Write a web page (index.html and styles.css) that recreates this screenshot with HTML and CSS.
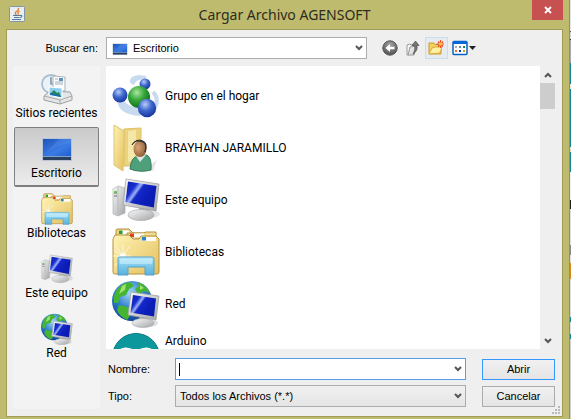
FILE: index.html
```html
<!DOCTYPE html>
<html lang="es">
<head>
<meta charset="utf-8">
<title>Cargar Archivo AGENSOFT</title>
<link rel="stylesheet" href="styles.css">
</head>
<body>
<svg class="defs" aria-hidden="true">
  <defs>
    <linearGradient id="screen" x1="0" y1="0" x2="1" y2=".6"><stop offset="0" stop-color="#0a1ca8"/><stop offset=".3" stop-color="#1830d0"/><stop offset=".42" stop-color="#9db2f8"/><stop offset=".5" stop-color="#1428c8"/><stop offset=".8" stop-color="#0c1cb8"/><stop offset="1" stop-color="#0a1cb0"/></linearGradient>
    <linearGradient id="desk" x1="0" y1="0" x2="1" y2="1"><stop offset="0" stop-color="#1f55b8"/><stop offset=".6" stop-color="#3a7be4"/><stop offset="1" stop-color="#1e5fd0"/></linearGradient>
    <linearGradient id="metal" x1="0" y1="0" x2="1" y2="1"><stop offset="0" stop-color="#fafafa"/><stop offset="1" stop-color="#a2a5a8"/></linearGradient>
    <linearGradient id="fold" x1="0" y1="0" x2="1" y2="1"><stop offset="0" stop-color="#fff3b4"/><stop offset="1" stop-color="#e3bf5c"/></linearGradient>
    <linearGradient id="aqua" x1="0" y1="0" x2="0" y2="1"><stop offset="0" stop-color="#b8e9fa"/><stop offset=".5" stop-color="#7cc8ea"/><stop offset="1" stop-color="#5cb0de"/></linearGradient>
    <radialGradient id="green" cx=".4" cy=".3" r=".7"><stop offset="0" stop-color="#a8e89c"/><stop offset=".5" stop-color="#36a63c"/><stop offset="1" stop-color="#0c7218"/></radialGradient>
    <radialGradient id="blue" cx=".4" cy=".3" r=".7"><stop offset="0" stop-color="#b8cdfa"/><stop offset=".5" stop-color="#4068cc"/><stop offset="1" stop-color="#1838a0"/></radialGradient>
    <radialGradient id="sea" cx=".45" cy=".3" r=".75"><stop offset="0" stop-color="#a6d8fa"/><stop offset=".5" stop-color="#2f80cc"/><stop offset="1" stop-color="#0c3c90"/></radialGradient>
    <radialGradient id="dark" cx=".5" cy=".3" r=".7"><stop offset="0" stop-color="#a5a5a5"/><stop offset="1" stop-color="#505050"/></radialGradient>
    <radialGradient id="skin" cx=".35" cy=".4" r=".7"><stop offset="0" stop-color="#d9a878"/><stop offset="1" stop-color="#8a5730"/></radialGradient>

    <symbol id="i-monitor" viewBox="0 0 48 48">
      <ellipse cx="38" cy="38" rx="10" ry="4" fill="#000" opacity=".1"/>
      <path d="M1 13l5-3 7 2v25l-7 3-5-2z" fill="url(#metal)" stroke="#aaa" stroke-width=".6"/>
      <path d="M6 11v28" stroke="#bbb"/><path d="M2 17h3M2 20h3" stroke="#666"/><circle cx="3.500" cy="16" r="1.300" fill="#48d424"/>
      <path d="M27 31l10 2-1 6-9-2z" fill="#b9bcc0"/>
      <ellipse cx="29" cy="39" rx="13" ry="5.500" fill="url(#metal)" stroke="#a3a3a3" stroke-width=".6"/>
      <path d="M14 3l33 5-3 27-33-6z" fill="url(#metal)" stroke="#999" stroke-width=".7"/>
      <path d="M16 5.500l28.500 4.500-2.700 21.500L13.500 26z" fill="url(#screen)"/>
    </symbol>
    <symbol id="i-library" viewBox="0 0 48 48">
      <path d="M4 8V2q0-1 2-1h11l4 4h10v4z" fill="#ecd387" stroke="#b49340"/>
      <rect x="7" y="2.500" width="10" height="4" fill="#fff"/><rect x="7" y="2.500" width="3.500" height="3.500" fill="#25a036"/>
      <path d="M15 9V5h16l3-1h10v8z" fill="#f1da91" stroke="#b49340"/>
      <rect x="18" y="5.500" width="14" height="4" fill="#fff"/><rect x="18" y="5.500" width="4" height="3.500" fill="#e0401c"/>
      <path d="M1 11l2-4h14l4 4h6l2-3h15l3 3v33q0 2-2 2H3q-2 0-2-2z" fill="url(#fold)" stroke="#b49340"/>
      <rect x="30" y="9" width="14" height="4" fill="#fff"/><rect x="30" y="9" width="4" height="3.500" fill="#2683c4"/>
      <path d="M3 17l8 11M1 28h18M3 38l15-20M11 17v22M2 22l17 12" stroke="#fff" opacity=".7"/><circle cx="11" cy="28" r="3" fill="#fff" opacity=".8"/>
      <path d="M6 47V31q0-2 2-2h32q2 0 2 2v16h-9v-8H16v8z" fill="url(#aqua)" stroke="#52a3cb"/>
      <path d="M8 31h32v5H8z" fill="#d5f3fd" opacity=".5"/>
    </symbol>
    <symbol id="i-network" viewBox="0 0 48 48">
      <circle cx="20" cy="21" r="20" fill="url(#sea)"/>
      <path d="M3 13Q8 3 18 2l4 4-5 3-3 6-6 2-2 6-4 0q-1-5 1-10zM25 2q10 3 13 11l-6-2-6 3-3-5 4-3zM7 25l9 2 4 6-5 7q-8-4-10-10z" fill="#44b431"/>
      <path d="M10 6l4-2-1 6-6 4zM28 5l4 3-4 2z" fill="#a0e26c"/>
      <ellipse cx="37" cy="43" rx="9" ry="4" fill="#000" opacity=".12"/>
      <path d="M28 33l8 2v8l-9-1z" fill="#b6b9bd"/><ellipse cx="31" cy="43" rx="11" ry="4.500" fill="url(#metal)" stroke="#aaa" stroke-width=".6"/>
      <path d="M19 12l28 4-3 24-28-5z" fill="url(#metal)" stroke="#999" stroke-width=".7"/>
      <path d="M21 15l23 3.500-2 18L18.500 32.500z" fill="url(#screen)"/>
    </symbol>
    <symbol id="i-desktop" viewBox="0 0 32 32">
      <path d="M1 5h30v23H1z" fill="#b8c4d4"/><path d="M2 6h28v17H2z" fill="url(#desk)"/>
      <path d="M2 23L18 6h12v4Q14 12 2 23z" fill="#6aa2f4" opacity=".25"/>
      <path d="M2 23h28v4H2z" fill="#29405e"/><path d="M2 23h28v1H2z" fill="#7ea0ca"/>
    </symbol>
  </defs>
</svg>

<div class="stage">
<main class="window">
  <header class="titlebar">
    <svg class="java" viewBox="0 0 16 16" aria-hidden="true">
      <rect x=".5" y=".5" width="15" height="15" rx="1" fill="#e8edf2" stroke="#8496a6"/>
      <path d="M9.500 2Q10 4 7.500 5.500T7.500 9M10.500 5Q8 6.500 9.500 8.500" fill="none" stroke="#e8782a" stroke-width="1.300"/>
      <path d="M4 9.500h7M5 11.500h5M3 13.500h9M11 9.500q3-.5 1.500 1.500l-2 .7" fill="none" stroke="#56799b" stroke-width="1.100"/>
    </svg>
    <h1>Cargar Archivo AGENSOFT</h1>
    <button class="close" type="button" aria-label="Cerrar"><svg viewBox="0 0 8 8"><path d="M1 1l6 6M7 1L1 7" stroke="#fff" stroke-width="1.800"/></svg></button>
  </header>

  <form class="client">
    <div class="lookbar">
      <label for="look">Buscar en:</label>
      <div class="combo look">
        <svg class="mini" aria-hidden="true"><use href="#i-desktop"/></svg>
        <select id="look"><option>Escritorio</option></select>
        <svg class="chev" viewBox="0 0 8 8"><path d="M1 2l3 3 3-3" /></svg>
      </div>
      <div class="tools">
        <button type="button" aria-label="Atrás"><svg viewBox="0 0 16 16"><circle cx="8" cy="8" r="7.200" fill="url(#dark)" stroke="#555"/><path d="M3.500 8L8 4v2.700h4.500v2.600H8V12z" fill="#fff"/></svg></button>
        <button type="button" aria-label="Subir un nivel"><svg viewBox="0 0 16 16"><path d="M2 5l3-1 1 1 3-1v10l-7 1z" fill="#f7f7f7" stroke="#999"/><path d="M5 7l6-1-2 9H3z" fill="#e2e2e2" stroke="#999"/><path d="M8 14q3-4 1.500-8.500H7L10.500 1 14 5.500h-2Q13 11 8 14z" fill="#777" stroke="#4b4b4b" stroke-width=".7"/></svg></button>
        <button class="hot" type="button" aria-label="Crear nueva carpeta"><svg viewBox="0 0 16 16"><path d="M1 14V3h5l1 1.500h6V14z" fill="#f5d060" stroke="#c99a2c"/><path d="M1 14L4 8l3-1h7l-2 6z" fill="#fff0a6" stroke="#d8ac3c"/><path d="M12.500 0v8M8.500 4h8M10 1.500l5 5M15 1.500l-5 5" stroke="#ec4b26" stroke-width="1.200"/><circle cx="12.500" cy="4" r="1.700" fill="#ffc32c"/></svg></button>
        <button class="views" type="button" aria-label="Menú Ver"><svg viewBox="0 0 24 16"><rect x="1" y="1.500" width="14" height="13" rx="1" fill="#fff" stroke="#0860c4" stroke-width="1.500"/><path d="M1 1h14v3H1z" fill="#0868d4"/><path d="M3 6h2v2H3z" fill="#aaa"/><path d="M7 6h2v2H7z" fill="#5686d4"/><path d="M11 6h2v2h-2z" fill="#139542"/><path d="M3 10h2v2H3z" fill="#f06843"/><path d="M7 10h2v2H7z" fill="#16369c"/><path d="M11 10h2v2h-2z" fill="#c69a13"/><path d="M17 6h7l-3.500 4z" fill="#222"/></svg></button>
      </div>
    </div>

    <nav class="places">
      <button type="button"><svg viewBox="0 0 32 32" aria-hidden="true"><circle cx="10" cy="11" r="9" fill="#eaf2f8" stroke="#a9bfcf" stroke-width="1.800"/><path d="M10 4v7h5" fill="none" stroke="#5a7c98" stroke-width="1.200"/><path d="M12 3l12 1v14H12z" fill="#fafcfd" stroke="#a8b4bd"/><path d="M14 6h3M14 9h8M14 11h8" stroke="#9cb0bf"/><path d="M18 5h4v3h-4z" fill="#5b91bd"/><path d="M3 23l6-5 20 1 2 4v4l-12 4L3 27z" fill="#e3e5e6" stroke="#9c9fa2"/><path d="M3 23l16 4v4M19 27l12-4" fill="none" stroke="#aaa"/><path d="M8 14l13 1v10L8 22z" fill="#8dcff0" stroke="#fff"/><path d="M9 21l4-4 3 3 2-1 2 5z" fill="#28805a"/><path d="M9 20l11 3v1L9 22z" fill="#1470b8"/></svg><span>Sitios recientes</span></button>
      <button class="selected" type="button"><svg aria-hidden="true"><use href="#i-desktop"/></svg><span>Escritorio</span></button>
      <button type="button"><svg aria-hidden="true"><use href="#i-library"/></svg><span>Bibliotecas</span></button>
      <button type="button"><svg aria-hidden="true"><use href="#i-monitor"/></svg><span>Este equipo</span></button>
      <button type="button"><svg aria-hidden="true"><use href="#i-network"/></svg><span>Red</span></button>
    </nav>

    <div class="pane">
      <ul class="files">
        <li><svg viewBox="0 0 48 48" aria-hidden="true"><path d="M20 12q4-8 14-6M20 10q-1-5 9-5M41 20q8 8-1 20M7 29q2 12 21 13M10 28q3 9 17 10" fill="none" stroke="#a9c6e8" stroke-width="4" opacity=".65"/><circle cx="33" cy="12" r="5.500" fill="url(#blue)"/><circle cx="8" cy="23" r="7.500" fill="url(#blue)"/><circle cx="27" cy="25" r="11" fill="url(#green)"/><circle cx="35" cy="36" r="9.200" fill="url(#blue)"/></svg><span>Grupo en el hogar</span></li>
        <li><svg viewBox="0 0 48 48" aria-hidden="true"><path d="M33 45l12-9-4 11z" fill="#000" opacity=".1"/><path d="M12 5l17-1v38H12z" fill="#ecd27c" stroke="#dcc065"/><path d="M16 7l8-1v32h-8z" fill="#f5e7a8"/><path d="M2 1l10 6v15l-1 25L2 41z" fill="url(#fold)" stroke="#dcc474"/><path d="M18 45q1-13 9-13l8-1q5 3 4 15-11 3-21-1z" fill="#4f9f7b" stroke="#367a5c"/><path d="M24 32l4 6 6-7z" fill="#dbe9e2"/><ellipse cx="28" cy="25" rx="6.500" ry="8" fill="url(#skin)"/><path d="M20 21q3-6 11-3 4 2 2 10 3-9-2-11-7-3-11 4z" fill="#343434" stroke="#343434"/></svg><span>BRAYHAN JARAMILLO</span></li>
        <li><svg aria-hidden="true"><use href="#i-monitor"/></svg><span>Este equipo</span></li>
        <li><svg aria-hidden="true"><use href="#i-library"/></svg><span>Bibliotecas</span></li>
        <li><svg aria-hidden="true"><use href="#i-network"/></svg><span>Red</span></li>
        <li class="cut"><svg viewBox="0 0 48 48" aria-hidden="true"><circle cx="24" cy="24" r="23.500" fill="#0b979c" stroke="#087a80"/><path d="M24 23c-5-8-17-8-17 0s12 8 17 0c5-8 17-8 17 0s-12 8-17 0z" fill="none" stroke="#fff" stroke-width="5"/></svg><span>Arduino</span></li>
      </ul>
      <div class="scroll">
        <button type="button" aria-label="Subir"><svg class="chev" viewBox="0 0 8 8"><path d="M1 6l3-3 3 3"/></svg></button>
        <div class="thumb"></div>
        <button type="button" aria-label="Bajar"><svg class="chev" viewBox="0 0 8 8"><path d="M1 2l3 3 3-3"/></svg></button>
      </div>
    </div>

    <div class="fields">
      <label for="name">Nombre:</label>
      <div class="combo name"><input id="name" type="text" autocomplete="off"><i class="caret"></i><svg class="chev" viewBox="0 0 8 8"><path d="M1 2l3 3 3-3"/></svg></div>
      <button class="push primary" type="submit">Abrir</button>
      <label for="type">Tipo:</label>
      <div class="combo type"><select id="type"><option>Todos los Archivos (*.*)</option></select><svg class="chev" viewBox="0 0 8 8"><path d="M1 2l3 3 3-3"/></svg></div>
      <button class="push" type="button">Cancelar</button>
    </div>
    <svg class="grip" viewBox="0 0 9 9" aria-hidden="true"><path d="M6 0h2v2H6zM3 3h2v2H3zM6 3h2v2H6zM0 6h2v2H0zM3 6h2v2H3zM6 6h2v2H6z" fill="#b9b9b9"/></svg>
  </form>
</main>
<div class="behind"></div>
</div>
</body>
</html>
```
FILE: styles.css
```css
* { box-sizing: border-box; }

body {
  margin: 0;
  font: 12px/16px Roboto, "Noto Sans", sans-serif;
  color: #000;
}

button, input, select { font: inherit; color: inherit; margin: 0; }
button { padding: 0; border: 0; background: none; }
svg { display: block; flex: none; }

.defs { position: absolute; width: 0; height: 0; }

.stage { display: flex; min-height: 100vh; }

.window {
  flex: 1;
  min-width: 0;
  display: flex;
  flex-direction: column;
  padding: 0 6px 3px;
  background: #bfbb6e;
  border-right: 1px solid #96935a;
}

.behind {
  width: 1px;
  background: linear-gradient(#e6e6e6 0 31px, #555 31px 32px, #d8d8d8 32px 39px, #333 39px 40px, #aaa8b4 40px 63px, #1685a0 63px 84px, #e8e4d0 84px 89px, #1685a0 89px 147px, #e8e4d0 147px 152px, #1685a0 152px 172px, #eee 172px 200px, #222 200px 209px, #ddd 209px 245px, #888 245px 255px, #ddd 255px 263px, #d98a18 263px 279px, #ddd 279px 317px, #1685a0 317px 322px, #ddd 322px 334px, #1685a0 334px 339px, #d0d0d0 339px);
}

.titlebar {
  display: grid;
  grid-template-columns: 31px 1fr 31px;
  height: 29px;
}
.java { width: 16px; height: 16px; margin: 6px 0 0 3px; }
.titlebar h1 {
  margin: 0;
  font-family: "Noto Sans", sans-serif;
  font-size: 14px;
  line-height: 30px;
  font-weight: 400;
  text-align: center;
  color: #2d2c20;
}
.close {
  height: 20px;
  display: grid;
  place-items: center;
  background: #c75050;
}
.close svg { width: 8px; height: 8px; }

.client {
  flex: 1;
  position: relative;
  display: grid;
  grid-template-columns: 87px minmax(0, 1fr);
  grid-template-rows: 22px 283px auto;
  column-gap: 6px;
  row-gap: 7px;
  padding: 7px 7px 7px 6px;
  background: #efefef;
  border: 1px solid #9f9c58;
}

.lookbar, .fields { font-family: "Liberation Sans", Arial, sans-serif; }
.lookbar {
  grid-column: 1 / -1;
  display: grid;
  grid-template-columns: 87px minmax(0, 260fr) 182fr;
  column-gap: 6px;
  align-items: center;
}
.lookbar label { text-align: right; padding-right: 2px; font-size: 11px; }

.combo { position: relative; height: 22px; }
.combo select, .combo input {
  display: block;
  width: 100%;
  height: 100%;
  padding: 0 18px 0 4px;
  border: 1px solid #acacac;
  border-radius: 0;
  outline: 0;
  appearance: none;
  background: #fff;
  font-size: 11px;
}
.combo.look select { padding-left: 26px; }
.combo.name input { border-color: #569de5; caret-color: transparent; }
.combo.type select { background: linear-gradient(#f0f0f0, #e5e5e5); }
.combo .chev { position: absolute; right: 4px; top: 7px; pointer-events: none; }
.mini { position: absolute; left: 6px; top: 4px; width: 16px; height: 16px; }
.caret { position: absolute; left: 4px; top: 5px; width: 1px; height: 13px; background: #000; }

.chev { width: 8px; height: 8px; fill: none; stroke: #555; stroke-width: 2; }

.tools { display: flex; align-items: center; padding-left: 6px; }
.tools button {
  width: 23px;
  height: 22px;
  display: grid;
  place-items: center;
  border: 1px solid transparent;
}
.tools svg { width: 16px; height: 16px; }
.tools .hot { border-color: #cbdcea; background: #e6ebf0; }
.tools .views { width: 32px; }
.tools .views svg { width: 24px; }

.places {
  grid-row: 2 / 4;
  background: #f3f3f3;
  padding: 1px;
}
.places button {
  width: 100%;
  height: 60px;
  display: flex;
  flex-direction: column;
  align-items: center;
  padding-top: 5px;
  border: 1px solid transparent;
  white-space: nowrap;
}
.places svg { width: 32px; height: 32px; }
.places .selected {
  border: 1px solid #7f7f7f;
  border-bottom-width: 2px;
  border-radius: 2px;
  background: linear-gradient(#cacaca, #ececec);
}

.pane { display: flex; min-height: 0; }
.files {
  flex: 1;
  margin: 0;
  padding: 4px 0 0 6px;
  list-style: none;
  background: #fff;
  overflow: hidden;
}
.files li { display: flex; align-items: center; gap: 5px; height: 52px; }
.files svg { width: 48px; height: 48px; }
.files .cut { align-items: flex-start; padding-top: 3px; }

.scroll { width: 15px; display: flex; flex-direction: column; }
.scroll button { height: 17px; display: grid; place-items: center; }
.scroll button:last-child { margin-top: auto; }
.thumb { height: 26px; background: #cdcdcd; }

.fields {
  display: grid;
  grid-template-columns: 63px minmax(0, 1fr) 73px;
  grid-template-rows: 22px 22px;
  row-gap: 5px;
  align-items: center;
  padding: 2px 0;
  font-size: 11px;
}
.fields label { padding-left: 2px; }
.fields .combo { margin: 0 16px 0 6px; }
.push {
  height: 21px;
  border: 1px solid #acacac;
  background: linear-gradient(#f1f1f1, #e4e4e4);
}
.push.primary { border-color: #3399ff; }

.grip { position: absolute; right: 1px; bottom: 1px; width: 9px; height: 9px; }
```
